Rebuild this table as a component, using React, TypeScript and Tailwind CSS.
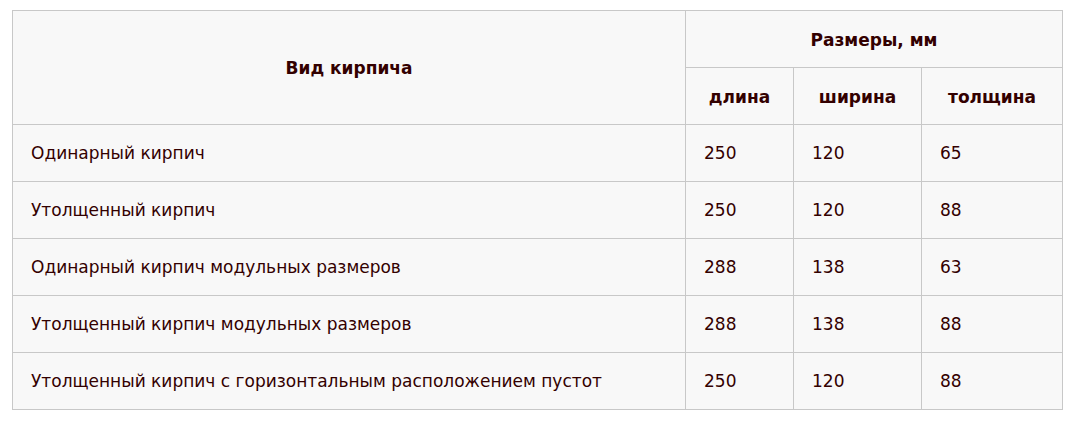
const rows: [string, string, string, string][] = [
  ["Одинарный кирпич", "250", "120", "65"],
  ["Утолщенный кирпич", "250", "120", "88"],
  ["Одинарный кирпич модульных размеров", "288", "138", "63"],
  ["Утолщенный кирпич модульных размеров", "288", "138", "88"],
  ["Утолщенный кирпич с горизонтальным расположением пустот", "250", "120", "88"],
];

export default function App() {
  return (
    <div className="bg-white w-[1074px] h-[424px] pt-[10px] pl-[12px]" style={{ fontFamily: '"DejaVu Sans", Verdana, sans-serif' }}>
      <table className="table-fixed border-collapse w-[1050px] bg-[#f8f8f8] text-[#330000] text-[17px]">
        <colgroup>
          <col className="w-[673px]" />
          <col className="w-[108px]" />
          <col className="w-[128px]" />
          <col className="w-[141px]" />
        </colgroup>
        <thead>
          <tr className="h-[57px]">
            <th rowSpan={2} className="border border-[#c8c8c8] font-bold text-center pt-[2px]">Вид кирпича</th>
            <th colSpan={3} className="border border-[#c8c8c8] font-bold text-center pt-[3px]">Размеры, мм</th>
          </tr>
          <tr className="h-[57px]">
            <th className="border border-[#c8c8c8] font-bold text-center pt-[3px]">длина</th>
            <th className="border border-[#c8c8c8] font-bold text-center pt-[3px]">ширина</th>
            <th className="border border-[#c8c8c8] font-bold text-center pt-[3px]">толщина</th>
          </tr>
        </thead>
        <tbody>
          {rows.map((r) => (
            <tr key={r[0]} className="h-[57px]">
              {r.map((c, i) => (
                <td key={i} className="border border-[#c8c8c8] px-[18px] pt-[2px] text-left">{c}</td>
              ))}
            </tr>
          ))}
        </tbody>
      </table>
    </div>
  );
}
